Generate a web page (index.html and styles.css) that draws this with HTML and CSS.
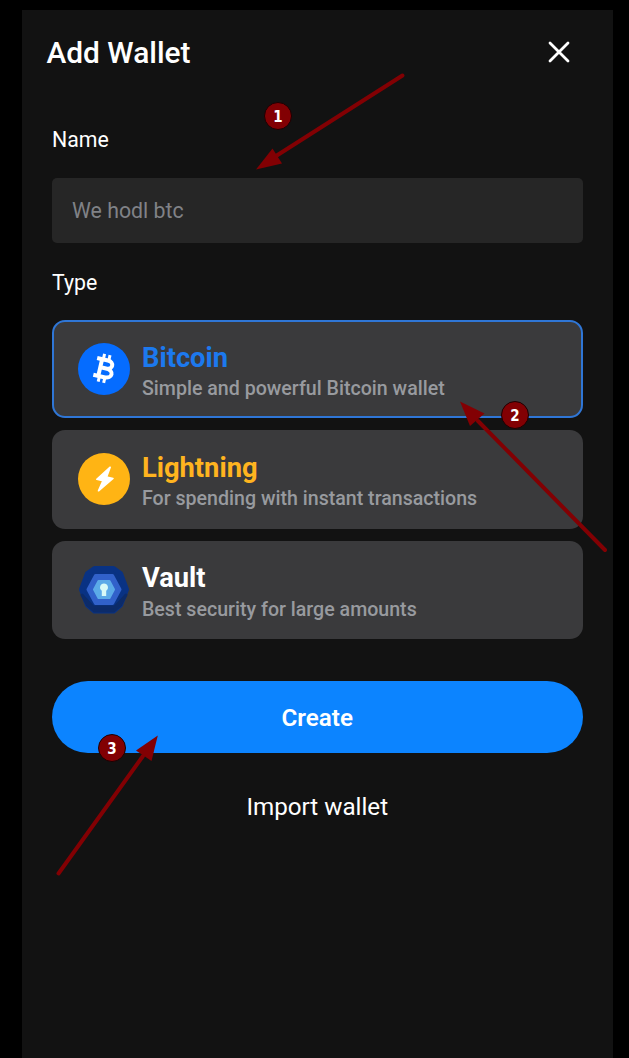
FILE: index.html
```html
<!DOCTYPE html>
<html lang="en">
<head>
<meta charset="utf-8">
<title>Add Wallet</title>
<link rel="stylesheet" href="styles.css">
</head>
<body>
<main class="panel">
  <header class="header">
    <h1 class="title">Add Wallet</h1>
    <button class="close" aria-label="Close">
      <svg width="22" height="22" viewBox="0 0 22 22"><path d="M2 2L20 20M20 2L2 20" stroke="#fff" stroke-width="2.8" stroke-linecap="round"/></svg>
    </button>
  </header>
  <section class="form">
    <label class="label" for="name">Name</label>
    <input class="input" id="name" type="text" placeholder="We hodl btc">
    <div class="label label-type">Type</div>
    <div class="cards">
      <div class="card selected">
        <svg class="icon" viewBox="0 0 52 52">
          <circle cx="26" cy="26" r="26" fill="#056cff"/>
          <g transform="translate(26.5 25.5) rotate(13)" fill="none" stroke="#fff">
            <path d="M-9.5 -8.6H1.5C8.6 -8.6 8.6 -0.3 1.5 -0.3H-4M1.5 -0.3C10.4 -0.3 10.4 8.6 1.5 8.6H-9.5M-4.4 -8.6V8.6" stroke-width="4"/>
            <path d="M-3.2 -14.2V-9M2.4 -14.2V-9M-3.2 9V14.2M2.4 9V14.2" stroke-width="3"/>
          </g>
        </svg>
        <div><h2 class="name blue">Bitcoin</h2><p class="desc">Simple and powerful Bitcoin wallet</p></div>
      </div>
      <div class="card">
        <svg class="icon" viewBox="0 0 52 52">
          <circle cx="26" cy="26" r="26" fill="#ffb414"/>
          <path d="M32.2 14.2L18.8 26.3L25 27.7L20.5 37.8L35 25.5L28.6 24Z" fill="#fff" stroke="#fff" stroke-width="1.6" stroke-linejoin="round"/>
        </svg>
        <div><h2 class="name gold">Lightning</h2><p class="desc">For spending with instant transactions</p></div>
      </div>
      <div class="card">
        <svg class="icon" viewBox="0 0 52 52" stroke-linejoin="round">
          <path d="M16.5 4.5H35.5L42.5 9.5L48.5 25.5L42.5 41L35.5 47H16.5L9.5 41L3.5 25.5L9.5 9.5Z" fill="#093283" stroke="#093283" stroke-width="5"/>
          <path d="M4 31L9.5 41L16.5 47H35.5L42.5 41L48 31L37 43H15Z" fill="#0c2b69" stroke="#0c2b69" stroke-width="3"/>
          <path d="M17.5 11.5H34.5L42 25.5L34.5 39.5H17.5L10 25.5Z" fill="#3161ca" stroke="#3161ca" stroke-width="3"/>
          <path d="M20.5 17H31.5L36 25.5L31.5 34H20.5L16 25.5Z" fill="#5baae8" stroke="#5baae8" stroke-width="2"/>
          <path d="M26 19.5a4 4 0 0 0-2.2 7.3V32h4.4v-5.2a4 4 0 0 0-2.2-7.3Z" fill="#d8faf7"/>
        </svg>
        <div><h2 class="name">Vault</h2><p class="desc">Best security for large amounts</p></div>
      </div>
    </div>
    <button class="create">Create</button>
    <a class="import">Import wallet</a>
  </section>
</main>
<div class="notes">
  <svg class="arrows" viewBox="0 0 629 1058">
    <g stroke="#820003" stroke-width="4" stroke-linecap="round">
      <path d="M402.5 75.5L276 156"/>
      <path d="M605 550L478 421"/>
      <path d="M58.5 873.5L143 756"/>
    </g>
    <g fill="#820003">
      <path d="M256 169.5L272.5 148.5L282 163.5Z"/>
      <path d="M460 401.5L484.5 413.5L470 426Z"/>
      <path d="M157.8 735.5L151.5 761L136 750.5Z"/>
    </g>
  </svg>
  <span class="badge b1">1</span>
  <span class="badge b2">2</span>
  <span class="badge b3">3</span>
</div>
</body>
</html>
```
FILE: styles.css
```css
* { box-sizing: border-box; }
body {
  margin: 0;
  position: relative;
  height: 1058px;
  padding: 9.5px 16px 0 22px;
  overflow: hidden;
  background: #000;
  color: #fff;
  font-family: Roboto, "Liberation Sans", sans-serif;
}
h1, h2, p { margin: 0; }
button { border: 0; padding: 0; color: inherit; font-family: inherit; }
.panel { height: 1048.5px; background: #121212; }
.header {
  display: flex;
  align-items: center;
  justify-content: space-between;
  height: 85px;
  padding: 0 43.5px 0 24.4px;
}
.title { font-size: 29.9px; line-height: 36px; font-weight: 500; padding-top: 1px; }
.close { display: flex; background: none; }
.form { display: flex; flex-direction: column; padding: 0 30.5px 0 30px; }
.label { margin-top: 32px; font-size: 21.3px; line-height: 26px; }
.input {
  height: 65px;
  margin-top: 25px;
  padding: 1px 20px 0;
  border: 0;
  border-radius: 5px;
  background: #262626;
  font: 21.3px Roboto, sans-serif;
}
.input::placeholder { color: #808287; opacity: 1; }
.label-type { margin-top: 27.5px; }
.cards { display: flex; flex-direction: column; gap: 12px; margin-top: 24px; }
.card {
  display: flex;
  align-items: center;
  gap: 12px;
  height: 98.3px;
  padding: 0 26px;
  border-radius: 13px;
  background: #3a3a3c;
}
.selected { border: 2px solid #2f76d6; padding: 0 24px; }
.icon { width: 52px; height: 52px; flex: none; }
.name { font-size: 27.3px; line-height: 34px; font-weight: 700; padding-top: 4.6px; }
.desc { font-size: 19.6px; line-height: 27px; font-weight: 500; color: #989a9f; padding-top: 0.4px; }
.blue { color: #1c79ee; }
.gold { color: #ffb41f; }
.create {
  height: 72px;
  margin-top: 42.5px;
  padding-top: 1px;
  border-radius: 36px;
  background: #0c84ff;
  font-size: 24.2px;
  font-weight: 600;
}
.import { margin-top: 38.5px; text-align: center; font-size: 24.2px; line-height: 30px; }
.notes, .arrows { position: absolute; inset: 0; }
.arrows { width: 629px; height: 1058px; }
.badge {
  position: absolute;
  width: 28px;
  height: 28px;
  border: 1px solid #1c0002;
  border-radius: 50%;
  background: #820003;
  text-align: center;
  font: 700 15px/28px "DejaVu Sans Condensed", "DejaVu Sans", sans-serif;
}
.b1 { left: 264px; top: 102px; }
.b2 { left: 501px; top: 401px; }
.b3 { left: 98px; top: 734px; }
```
